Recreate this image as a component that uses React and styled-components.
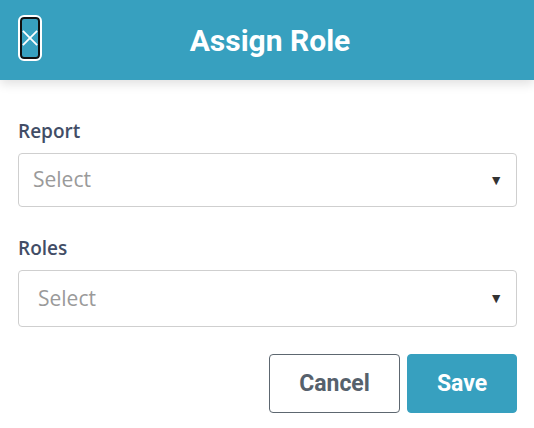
import styled, { createGlobalStyle } from "styled-components";

const GlobalStyle = createGlobalStyle`
  body {
    margin: 0;
    background: #fff;
    font-family: "Open Sans", sans-serif;
  }
`

const Page = styled.div`
  width: 534px;
  height: 428px;
  overflow: hidden;
  background: #fff;
`

const Header = styled.header`
  position: relative;
  display: flex;
  align-items: center;
  justify-content: center;
  height: 80px;
  background-color: #37a0bf;
  box-shadow: 0 4px 10px rgba(0, 0, 0, 0.12);
`

const Title = styled.h1`
  margin: 0 0 0 6px;
  font-family: Roboto, sans-serif;
  font-weight: 700;
  font-size: 30px;
  color: #fff;
`

const CloseButton = styled.button`
  position: absolute;
  left: 20px;
  top: 17px;
  width: 20px;
  height: 42px;
  padding: 0;
  display: flex;
  align-items: center;
  justify-content: center;
  background: transparent;
  border: 2px solid #111;
  border-radius: 4px;
  outline: 2px solid #fff;
  cursor: pointer;
`

const Form = styled.div`
  padding: 38px 17px 0 18px;
`

const Field = styled.div`
  margin-bottom: ${(p) => p.gap}px;
`

const Label = styled.label`
  display: block;
  font-size: 19px;
  font-weight: 600;
  line-height: 27px;
  color: #424d66;
  margin-bottom: 8px;
`

const SelectBox = styled.div`
  display: flex;
  align-items: center;
  justify-content: space-between;
  height: ${(p) => p.h}px;
  box-sizing: border-box;
  padding: 0 13px 2px ${(p) => p.pl}px;
  border: 1px solid #cfcfcf;
  border-radius: 4px;
  cursor: pointer;
`

const Placeholder = styled.span`
  font-size: 21px;
  color: #9a9a9a;
`

const Arrow = styled.span`
  font-size: 14px;
  color: #333;
`

const Actions = styled.div`
  display: flex;
  justify-content: flex-end;
  gap: 7px;
`

const Button = styled.button`
  height: 59px;
  width: ${(p) => p.w}px;
  border-radius: 4px;
  font-family: Roboto, sans-serif;
  font-weight: 700;
  font-size: 23px;
  cursor: pointer;
  border: 1px solid ${(p) => (p.primary ? "#37a0bf" : "#5d6770")};
  background: ${(p) => (p.primary ? "#37a0bf" : "#fff")};
  color: ${(p) => (p.primary ? "#fff" : "#56616c")};
`

function App() {
  return (
    <Page>
      <GlobalStyle />
      <Header>
        <CloseButton aria-label="close">
          <svg width="18" height="18" viewBox="0 0 18 18">
            <path d="M1 1 L17 17 M17 1 L1 17" stroke="#fff" strokeWidth="2" />
          </svg>
        </CloseButton>
        <Title>Assign Role</Title>
      </Header>
      <Form>
        <Field gap={28}>
          <Label>Report</Label>
          <SelectBox h={54} pl={14}>
            <Placeholder>Select</Placeholder>
            <Arrow>▼</Arrow>
          </SelectBox>
        </Field>
        <Field gap={27}>
          <Label>Roles</Label>
          <SelectBox h={57} pl={19}>
            <Placeholder>Select</Placeholder>
            <Arrow>▼</Arrow>
          </SelectBox>
        </Field>
        <Actions>
          <Button w={131}>Cancel</Button>
          <Button w={110} primary>Save</Button>
        </Actions>
      </Form>
    </Page>
  );
}

export default App
